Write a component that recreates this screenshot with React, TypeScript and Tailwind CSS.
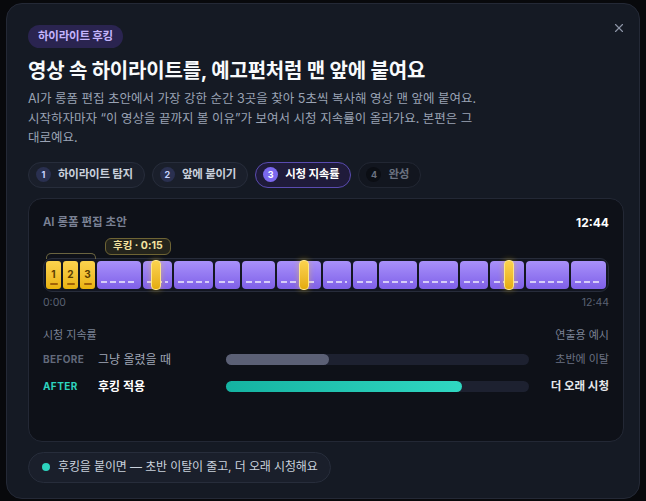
import React from 'react';
import { X } from 'lucide-react';

const steps = [
    { n: 1, label: '하이라이트 탐지', state: 'done' },
    { n: 2, label: '앞에 붙이기', state: 'done' },
    { n: 3, label: '시청 지속률', state: 'active' },
    { n: 4, label: '완성', state: 'todo' },
];

const clips = [43, 28, 37, 24, 32, 43, 27, 23, 37, 38, 27, 33, 41, 34];
const hooks = [107, 255, 460];

const StepPill = ({ n, label, state }: { n: number; label: string; state: string }) => {
    const wrap =
        state === 'active'
            ? 'bg-[#1f1b3a] border-[#5a4bb0] text-white'
            : state === 'todo'
              ? 'bg-[#12161f] border-[#222733] text-[#6b7280]'
              : 'bg-[#1a1f2b] border-[#272d3b] text-[#c9d0dc]';
    const dot =
        state === 'active'
            ? 'bg-[#7b68ee] text-white'
            : state === 'todo'
              ? 'bg-[#0b0e14] text-[#6b7280]'
              : 'bg-[#2a3050] text-[#c7d2fe]';
    return (
        <div className={`flex items-center h-[26px] pl-[7px] pr-[11px] gap-[7px] rounded-full border ${wrap}`}>
            <span className={`w-[15px] h-[15px] rounded-full flex items-center justify-center text-[9px] font-bold ${dot}`}>{n}</span>
            <span className="text-[11.5px] font-bold tracking-[-0.02em]">{label}</span>
        </div>
    );
};

const Clip = ({ w }: { w: number }) => (
    <div
        className="h-[28px] rounded-[4px] bg-gradient-to-b from-[#a991fa] to-[#7f5fe8] flex flex-col justify-end"
        style={{ flexGrow: w, flexBasis: 0 }}
    >
        <div className="h-[2px] mx-[4px] mb-[6px] bg-[repeating-linear-gradient(90deg,rgba(255,255,255,0.65)_0_6px,transparent_6px_9px)]" />
    </div>
);

const HookBlock = ({ n }: { n: number }) => (
    <div className="w-[15px] shrink-0 h-[28px] rounded-[3px] bg-gradient-to-b from-[#fcd34d] to-[#eab308] flex flex-col items-center justify-center pt-[3px]">
        <span className="text-[10px] font-bold leading-[12px] text-[#5c3d00]">{n}</span>
        <span className="w-[8px] h-[2px] mt-[3px] rounded-full bg-[#a16207]" />
    </div>
);

export default function App() {
    return (
        <div className="min-h-[501px] bg-[#08090c] pt-[3px] pl-[6px] font-['Inter','Noto_Sans_CJK_KR',sans-serif]">
            <div className="w-[634px] rounded-[16px] border border-[#242936] bg-[#151a24] pl-[21px] pr-[15px] pt-[21px] pb-[15px]">
                <div className="flex items-start justify-between">
                    <span className="h-[23px] px-[10px] rounded-full bg-[#2a2450] text-[#c4b5fd] text-[11.5px] font-bold flex items-center tracking-[-0.02em]">
                        하이라이트 후킹
                    </span>
                    <button className="-mt-[5px] -mr-[3px] w-[16px] h-[16px] flex items-center justify-center text-[#8b93a5]">
                        <X className="w-[14px] h-[14px]" strokeWidth={2} />
                    </button>
                </div>

                <h1 className="mt-[10px] text-[20px] leading-[26px] font-bold text-[#f8fafc] tracking-[-0.01em]">
                    영상 속 하이라이트를, 예고편처럼 맨 앞에 붙여요
                </h1>
                <p className="mt-[5px] max-w-[452px] text-[12.5px] leading-[19.5px] text-[#9aa3b4]">
                    AI가 롱폼 편집 초안에서 가장 강한 순간 3곳을 찾아 5초씩 복사해 영상 맨 앞에 붙여요. 시작하자마자 “이 영상을 끝까지 볼 이유”가 보여서 시청 지속률이 올라가요. 본편은 그대로예요.
                </p>

                <div className="mt-[14px] flex gap-[7px]">
                    {steps.map((s) => (
                        <StepPill key={s.n} {...s} />
                    ))}
                </div>

                <div className="mt-[10px] h-[244px] rounded-[14px] border border-[#232835] bg-[#0e1118] px-[14px] pt-[16px]">
                    <div className="flex items-center justify-between h-[16px]">
                        <span className="text-[11.5px] font-semibold text-[#7a8194]">AI 롱폼 편집 초안</span>
                        <span className="text-[12px] font-bold text-white">12:44</span>
                    </div>

                    <div className="relative mt-[27px] rounded-[9px] border border-[#272c3a] bg-[#131722] p-[2px] flex gap-[2px]">
                        <div className="absolute left-[2px] -top-[6px] w-[50px] h-[6px] rounded-t-[5px] border-t border-l border-r border-[#6a6440]" />
                        <div className="absolute left-[61px] -top-[21px] h-[17px] px-[7px] rounded-[6px] border border-[#6e6434] bg-[#24241c] text-[10.5px] font-bold text-[#f3e3a0] flex items-center whitespace-nowrap">
                            후킹 · 0:15
                        </div>
                        <HookBlock n={1} />
                        <HookBlock n={2} />
                        <HookBlock n={3} />
                        {clips.map((w, i) => (
                            <Clip key={i} w={w} />
                        ))}
                        {hooks.map((l) => (
                            <div
                                key={l}
                                className="absolute top-[1px] w-[10px] h-[30px] rounded-[4px] border border-[#fde68a] bg-gradient-to-b from-[#fcd34d] to-[#e5ac08] shadow-[0_0_6px_rgba(250,204,21,0.45)]"
                                style={{ left: l }}
                            />
                        ))}
                    </div>

                    <div className="mt-[4px] flex justify-between text-[10.5px] leading-[14px] text-[#5b6273]">
                        <span>0:00</span>
                        <span>12:44</span>
                    </div>

                    <div className="mt-[17px] flex justify-between text-[11px] leading-[16px] text-[#7a8194]">
                        <span>시청 지속률</span>
                        <span>연출용 예시</span>
                    </div>

                    <div className="mt-[7px] grid grid-cols-[55px_128px_1fr_80px] items-center h-[20px]">
                        <span className="text-[10px] font-bold tracking-[0.04em] text-[#636a7b]">BEFORE</span>
                        <span className="text-[12px] text-[#a0a7b6]">그냥 올렸을 때</span>
                        <div className="h-[11px] rounded-full bg-[#1d2130]">
                            <div className="h-full w-[34%] rounded-full bg-[#5b6075]" />
                        </div>
                        <span className="text-right text-[11px] text-[#6b7282]">초반에 이탈</span>
                    </div>
                    <div className="mt-[7px] grid grid-cols-[55px_128px_1fr_80px] items-center h-[20px]">
                        <span className="text-[10px] font-bold tracking-[0.04em] text-[#2dd4bf]">AFTER</span>
                        <span className="text-[12px] font-bold text-white">후킹 적용</span>
                        <div className="h-[11px] rounded-full bg-[#1d2130]">
                            <div className="h-full w-[78%] rounded-full bg-gradient-to-r from-[#14b3a1] to-[#30d8c2]" />
                        </div>
                        <span className="text-right text-[11.5px] font-bold text-[#e5e7eb]">더 오래 시청</span>
                    </div>
                </div>

                <div className="mt-[10px] inline-flex items-center h-[31px] pl-[13px] pr-[12px] gap-[8px] rounded-full border border-[#272d3b] bg-[#1a1f2b]">
                    <span className="w-[8px] h-[8px] rounded-full bg-[#2dd4bf]" />
                    <span className="text-[12px] tracking-[-0.01em] text-[#c9d1dc]">후킹을 붙이면 — 초반 이탈이 줄고, 더 오래 시청해요</span>
                </div>
            </div>
        </div>
    );
}
